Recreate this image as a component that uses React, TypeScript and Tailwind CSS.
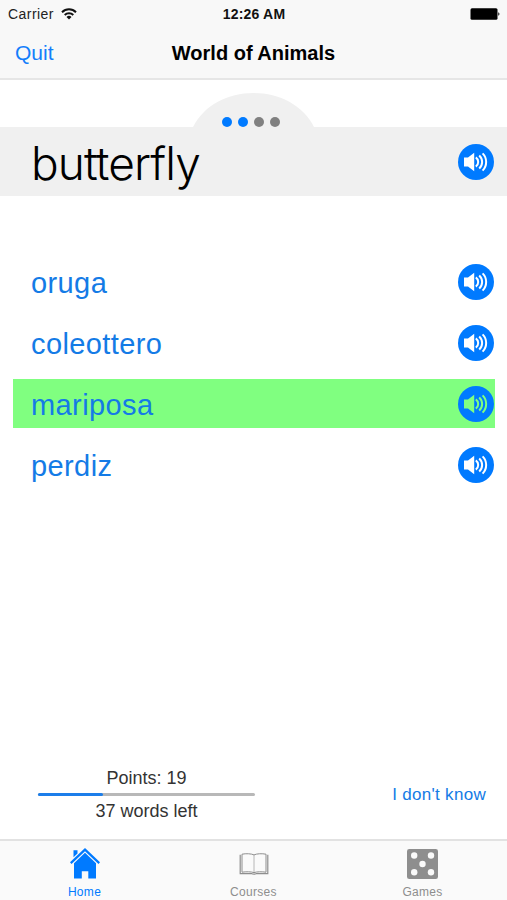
interface Answer {
  text: string;
  correct?: boolean;
}

const answers: Answer[] = [
  { text: 'oruga' },
  { text: 'coleottero' },
  { text: 'mariposa', correct: true },
  { text: 'perdiz' },
];

const steps = [true, true, false, false];

function SpeakerButton({ highlighted = false }: { highlighted?: boolean }) {
  return (
    <button
      type="button"
      aria-label="Listen"
      className={`h-9 w-9 shrink-0 ${highlighted ? 'text-[#80ff80]' : 'text-white'}`}
    >
      <svg viewBox="0 0 36 36" className="block h-full w-full">
        <circle cx="18" cy="18" r="18" fill="#007aff" />
        <path d="M6 13.5h4l6.2-4.8v18.6L10 22.5H6z" fill="currentColor" />
        <g fill="none" stroke="currentColor" strokeWidth="2">
          <path d="M17.8 13.4a5.6 5.6 0 0 1 0 9.2" />
          <path d="M21.2 11.4a8.9 8.9 0 0 1 0 13.2" />
          <path d="M24.6 9.4a12.2 12.2 0 0 1 0 17.2" />
        </g>
      </svg>
    </button>
  );
}

function StatusBar() {
  return (
    <div className="grid h-7 grid-cols-3 items-center pl-2 pr-[7px] text-[14px] leading-none">
      <div className="flex items-center gap-[7px] text-[#222]">
        <span className="tracking-[0.45px]">Carrier</span>
        <svg viewBox="0 0 16 12" className="h-3 w-4" fill="none" stroke="#111" strokeWidth="2">
          <path d="M1 4.2a10 10 0 0 1 14 0" />
          <path d="M3.7 7a6.2 6.2 0 0 1 8.6 0" />
          <path d="M8 11.4 5.5 9a3.6 3.6 0 0 1 5 0z" fill="#111" stroke="none" />
        </svg>
      </div>
      <span className="text-center text-[14px] font-bold tracking-[0.2px] text-[#111]">12:26 AM</span>
      <svg viewBox="0 0 30 12" className="h-3 w-[30px] justify-self-end">
        <rect x=".5" y=".3" width="27" height="11.4" rx="1.5" />
        <path d="M28.3 4.2a2 2 0 0 1 0 3.6z" />
      </svg>
    </div>
  );
}

function HomeIcon() {
  return (
    <svg viewBox="0 0 30 31" className="h-[31px] w-[30px]" fill="currentColor">
      <path d="M3.5 2.2h4v3.4l-4 3.7z" />
      <path d="M15 0 30 14.2l-1.5 1.7L15 3.2 1.5 15.9 0 14.2z" />
      <path d="M15 4.8 26 15.2v15.3h-7.7v-7.2h-6.5v7.2H4V15.2z" />
    </svg>
  );
}

function BookIcon() {
  return (
    <svg viewBox="0 0 30 22" className="h-[22px] w-[30px]" fill="none" stroke="currentColor">
      <path d="M3 1.2C7 .4 12.2.6 15 1.9c2.8-1.3 8-1.5 12-.7v18c-4-.6-9.2-.6-12 .4-2.8-1-8-1-12-.4z" strokeWidth="1" />
      <path d="M15 2v17.5" strokeWidth="1" opacity=".6" />
      <path d="M1.2 1.8v18.8h11.6c.8.7 3.6.7 4.4 0h11.6V1.8" strokeWidth="1.2" />
    </svg>
  );
}

function DiceIcon() {
  return (
    <svg viewBox="0 0 31 30" className="h-[30px] w-[31px]">
      <rect width="31" height="30" rx="2.3" fill="currentColor" />
      <g fill="#fafafa">
        <circle cx="7.2" cy="6.5" r="3.2" />
        <circle cx="24" cy="6.5" r="3.2" />
        <circle cx="15.5" cy="15" r="3.2" />
        <circle cx="7.2" cy="23.3" r="3.2" />
        <circle cx="24" cy="23.3" r="3.2" />
      </g>
    </svg>
  );
}

const tabs = [
  { label: 'Home', icon: HomeIcon, active: true },
  { label: 'Courses', icon: BookIcon, active: false },
  { label: 'Games', icon: DiceIcon, active: false },
];

export default function App() {
  return (
    <div className="flex h-[900px] w-[507px] flex-col overflow-hidden bg-white font-['Liberation_Sans',Arial,sans-serif] text-black">
      <header className="h-20 shrink-0 border-b-2 border-[#e6e6e6] bg-[#f8f8f8]">
        <StatusBar />
        <div className="grid h-[49px] grid-cols-[1fr_auto_1fr] items-center">
          <button type="button" className="justify-self-start pl-[15px] text-[21px] text-[#147efb]">
            Quit
          </button>
          <h1 className="text-[20px] font-bold">World of Animals</h1>
        </div>
      </header>

      {/* Step dots sit in the dome above the word */}
      <div className="flex h-[47px] shrink-0 items-end justify-center">
        <div className="relative h-[34px] w-[123px]">
          <svg viewBox="0 0 123 34" className="h-full w-full">
            <path d="M1 34C12 12 36 0 61.5 0S111 12 122 34z" fill="#f0f0f0" />
          </svg>
          <div className="absolute inset-x-0 bottom-0 flex justify-center gap-1.5 pr-[5px]">
            {steps.map((done, i) => (
              <span key={i} className={`h-2.5 w-2.5 rounded-full ${done ? 'bg-[#007aff]' : 'bg-[#808080]'}`} />
            ))}
          </div>
        </div>
      </div>

      <section className="flex h-[69px] shrink-0 items-center justify-between bg-[#f0f0f0] pl-[31px] pr-[13px]">
        <h2 className="pt-[3px] font-['Inter','Liberation_Sans',sans-serif] text-[46px] font-light leading-none tracking-[-0.9px]">
          butterfly
        </h2>
        <SpeakerButton />
      </section>

      <ul className="mt-[61px] flex flex-col gap-3 pl-[13px] pr-3">
        {answers.map((answer) => (
          <li
            key={answer.text}
            className={`flex h-[49px] items-center justify-between pl-[18px] pr-px ${answer.correct ? 'bg-[#80ff80]' : ''}`}
          >
            <span className="pt-1 text-[29px] leading-none tracking-[0.4px] text-[#147be6]">{answer.text}</span>
            <SpeakerButton highlighted={answer.correct} />
          </li>
        ))}
      </ul>

      <section className="mb-[17px] mt-auto flex items-center justify-between pl-[38px] pr-[21px]">
        <div className="w-[217px] text-center text-[18px] leading-[22px] text-[#333]">
          <p>Points: 19</p>
          <div className="my-1 h-[3px] rounded-full bg-[#b8b8b8]">
            <div className="h-full w-[30%] rounded-full bg-[#1c7eea]" />
          </div>
          <p>37 words left</p>
        </div>
        <button type="button" className="text-[17px] tracking-[0.3px] text-[#147be6]">
          I don't know
        </button>
      </section>

      <nav className="grid h-[61px] shrink-0 grid-cols-3 border-t-2 border-[#e2e2e2] bg-[#fafafa]">
        {tabs.map(({ label, icon: Icon, active }) => (
          <a
            key={label}
            className={`flex flex-col items-center ${active ? 'text-[#007aff]' : 'text-[#8e8e8e]'}`}
          >
            <span className="mt-[7px] flex h-[31px] items-center">
              <Icon />
            </span>
            <span className="mt-[6px] text-[12px] leading-[14px] tracking-[0.3px]">{label}</span>
          </a>
        ))}
      </nav>
    </div>
  );
}
